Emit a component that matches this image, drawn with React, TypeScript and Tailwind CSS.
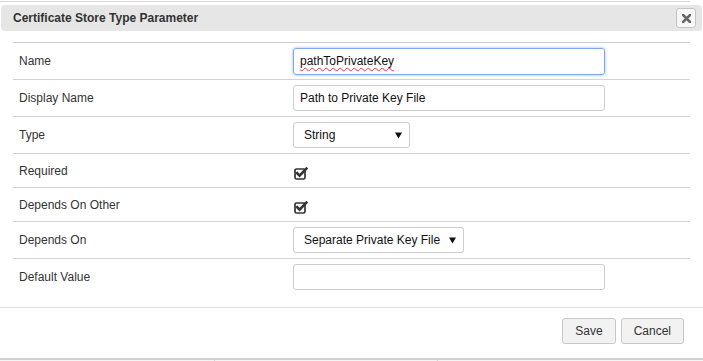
import React from "react";

const CheckIcon = () => (
  <svg width="14" height="13" viewBox="0 0 14 13" className="block">
    <rect x="1" y="2" width="10" height="10" rx="1.5" fill="none" stroke="#333" strokeWidth="1.7" />
    <path d="M3.2 6.2 L5.6 8.6 L12.4 1.6" fill="none" stroke="#333" strokeWidth="2.6" strokeLinecap="square" />
  </svg>
);

const Caret = () => (
  <svg width="7" height="7" viewBox="0 0 7 7" className="block">
    <path d="M0 0.5 H7 L3.5 6.5 Z" fill="#111" />
  </svg>
);

const Row = ({ label, children, h, first }: { label: string; children: React.ReactNode; h: string; first?: boolean }) => (
  <div className={`flex items-center border-t ${first ? "border-[#cfcfcf]" : "border-[#d4d4d4]"} ${h}`}>
    <div className="w-[280px] pl-[6px] text-[12px] text-[#333]">{label}</div>
    <div className="flex-1 flex items-center">{children}</div>
  </div>
);

export default function App() {
  return (
    <div
      className="relative w-[703px] h-[361px] overflow-hidden bg-white"
      style={{ fontFamily: '"Liberation Sans", Arial, sans-serif' }}
    >
      <div className="h-[1px] w-[690px] bg-[#d6d6d6] mt-[1px]" />
      <div className="mx-[1px] mt-[3px] h-[26px] rounded-[4px] bg-[#e6e6e6] flex items-center justify-between pl-[12px] pr-[6px]">
        <span className="text-[12px] font-bold text-[#333]">Certificate Store Type Parameter</span>
        <button className="w-[20px] h-[20px] rounded-[3px] border border-[#c4c4c4] bg-[#f7f7f7] flex items-center justify-center">
          <svg width="9" height="9" viewBox="0 0 9 9">
            <path d="M1 1 L8 8 M8 1 L1 8" stroke="#666" strokeWidth="2.6" strokeLinecap="square" />
          </svg>
        </button>
      </div>
      <div className="mx-[13px] w-[677px] mt-[11px]">
        <Row label="Name" h="h-[37px]" first>
          <div className="w-[312px] h-[27px] rounded-[3px] border border-[#80a8ee] shadow-[0_0_3px_rgba(102,150,233,0.7)] flex items-center px-[6px] text-[12px] text-[#111]">
            <span className="underline decoration-wavy decoration-[#e33] decoration-[1px] underline-offset-[2px]">pathToPrivateKey</span>
          </div>
        </Row>
        <Row label="Display Name" h="h-[37px]">
          <div className="w-[312px] h-[26px] rounded-[3px] border border-[#ccc] flex items-center px-[6px] text-[12px] text-[#111]">
            Path to Private Key File
          </div>
        </Row>
        <Row label="Type" h="h-[37px]">
          <div className="w-[117px] h-[26px] rounded-[3px] border border-[#ccc] flex items-center justify-between pl-[10px] pr-[7px] text-[12px] text-[#111]">
            <span>String</span>
            <Caret />
          </div>
        </Row>
        <Row label="Required" h="h-[34px]">
          <div className="pl-[1px] pt-[5px]">
            <CheckIcon />
          </div>
        </Row>
        <Row label="Depends On Other" h="h-[34px]">
          <div className="pl-[1px] pt-[5px]">
            <CheckIcon />
          </div>
        </Row>
        <Row label="Depends On" h="h-[37px]">
          <div className="w-[171px] h-[26px] rounded-[3px] border border-[#ccc] flex items-center justify-between pl-[10px] pr-[7px] text-[12px] text-[#111]">
            <span>Separate Private Key File</span>
            <Caret />
          </div>
        </Row>
        <Row label="Default Value" h="h-[37px]">
          <div className="w-[312px] h-[26px] rounded-[3px] border border-[#ccc]" />
        </Row>
      </div>
      <div className="mt-[12px] border-t border-[#dcdcdc] flex justify-end gap-[5px] pr-[19px] pt-[10px]">
        <button className="h-[26px] px-[12px] rounded-[3px] border border-[#c8c8c8] bg-[#f2f2f2] text-[12px] text-[#333]">Save</button>
        <button className="h-[26px] px-[12px] rounded-[3px] border border-[#c8c8c8] bg-[#f2f2f2] text-[12px] text-[#333]">Cancel</button>
      </div>
      <div className="absolute left-0 right-0 top-[358px] h-[3px] border-t-2 border-[#d0d0d0] bg-[#f4f4f4]">
        <div className="absolute left-[214px] top-0 h-full w-[1px] bg-[#d0d0d0]" />
        <div className="absolute left-[437px] top-0 h-full w-[1px] bg-[#d0d0d0]" />
      </div>
    </div>
  );
}
